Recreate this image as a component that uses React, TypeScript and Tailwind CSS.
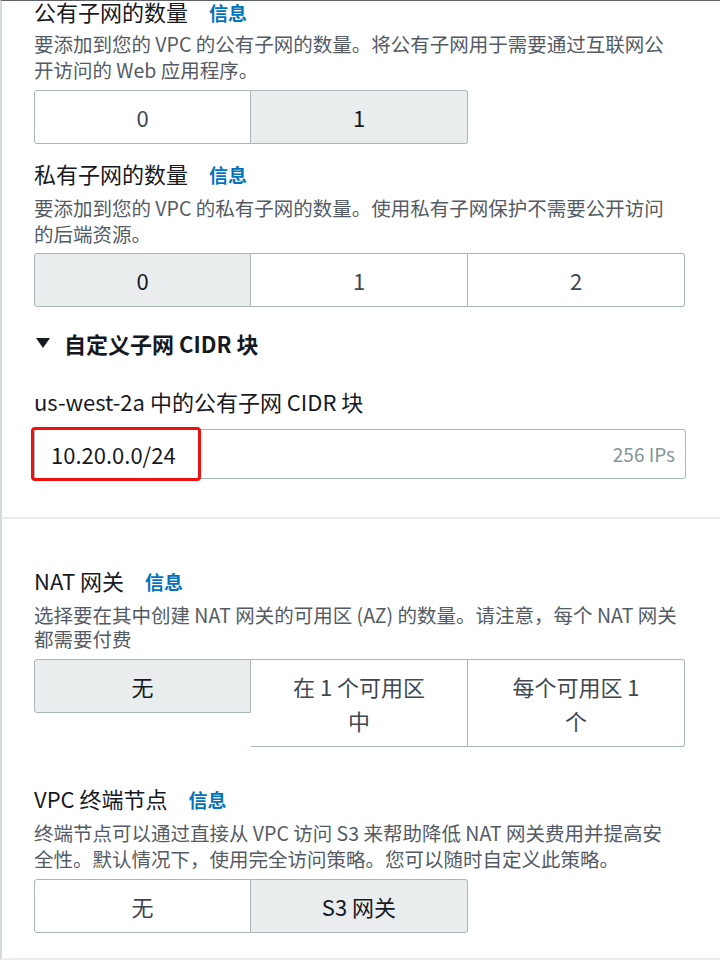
import React from 'react'

type Opt = { label: React.ReactNode; selected?: boolean }

function Segmented({ options }: { options: Opt[] }) {
  return (
    <div className="flex items-start">
      {options.map((o, i) => (
        <div
          key={i}
          className={
            'w-[217px] border-y border-r border-[#aab7b8] py-[9px] text-center text-[22px] leading-[34px] ' +
            (i === 0 ? 'border-l rounded-l-[3px] ' : '') +
            (i === options.length - 1 ? 'rounded-r-[3px] ' : '') +
            (o.selected ? 'bg-[#eaeded] text-[#16191f]' : 'bg-white text-[#414750]')
          }
        >
          {o.label}
        </div>
      ))}
    </div>
  )
}

function Label({ children }: { children: React.ReactNode }) {
  return (
    <div className="flex items-baseline gap-[21px] text-[22px] leading-[24px] text-[#16191f]">
      <span>{children}</span>
      <span className="text-[19px] font-bold text-[#0073bb]">信息</span>
    </div>
  )
}

function Desc({ children }: { children: React.ReactNode }) {
  return <p className="w-[640px] text-[19.5px] leading-[26px] text-[#545b64]">{children}</p>
}

export default function App() {
  return (
    <div className="h-[962px] w-[720px] overflow-hidden bg-white font-['Noto_Sans_CJK_SC','Noto_Sans',sans-serif]">
      <div className="h-[960px] border-t border-l-2 border-t-[#5f6368] border-l-[#d5dbdb] border-b-2 border-b-[#eaeded]">
        {/* subnets */}
        <section className="h-[518px] px-[32px]">
          <div className="-mt-[2px]">
            <Label>公有子网的数量</Label>
          </div>
          <div className="mt-[6px]">
            <Desc>要添加到您的 VPC 的公有子网的数量。将公有子网用于需要通过互联网公开访问的 Web 应用程序。</Desc>
          </div>
          <div className="mt-[7px]">
            <Segmented options={[{ label: '0' }, { label: '1', selected: true }]} />
          </div>

          <div className="mt-[17px]">
            <Label>私有子网的数量</Label>
          </div>
          <div className="mt-[8px]">
            <Desc>要添加到您的 VPC 的私有子网的数量。使用私有子网保护不需要公开访问的后端资源。</Desc>
          </div>
          <div className="mt-[6px]">
            <Segmented options={[{ label: '0', selected: true }, { label: '1' }, { label: '2' }]} />
          </div>

          <div className="mt-[24px] flex items-center gap-[14px] text-[22px] font-bold leading-[24px] text-[#16191f]">
            <svg width="14" height="12" viewBox="0 0 14 12" className="ml-[2px]">
              <path d="M0 1h14L7 11z" fill="#16191f" />
            </svg>
            <span>自定义子网 CIDR 块</span>
          </div>

          <div className="mt-[34px] text-[22px] leading-[24px] text-[#16191f]">us-west-2a 中的公有子网 CIDR 块</div>

          <div className="relative mt-[16px] flex h-[50px] w-[652px] items-center justify-between rounded-[3px] border border-[#aab7b8] pl-[16px] pr-[10px]">
            <span className="text-[22px] text-[#16191f]">10.20.0.0/24</span>
            <span className="text-[19px] text-[#879596]">256 IPs</span>
            <div className="absolute -left-[4px] -top-[3px] h-[54px] w-[170px] rounded-[4px] border-[3px] border-[#f01010]" />
          </div>
        </section>

        <div className="h-[2px] bg-[#eaeded]" />

        {/* NAT / endpoints */}
        <section className="px-[32px] pt-[49px]">
          <Label>NAT 网关</Label>
          <div className="mt-[9px]">
            <p className="w-[660px] text-[19.5px] leading-[24px] text-[#545b64]">
              选择要在其中创建 NAT 网关的可用区 (AZ) 的数量。请注意，每个 NAT 网关都需要付费
            </p>
          </div>
          <div className="mt-[8px]">
            <Segmented
              options={[
                { label: '无', selected: true },
                { label: <>在 1 个可用区<br />中</> },
                { label: <>每个可用区 1<br />个</> },
              ]}
            />
          </div>

          <div className="mt-[39px]">
            <Label>VPC 终端节点</Label>
          </div>
          <div className="mt-[8px]">
            <Desc>终端节点可以通过直接从 VPC 访问 S3 来帮助降低 NAT 网关费用并提高安全性。默认情况下，使用完全访问策略。您可以随时自定义此策略。</Desc>
          </div>
          <div className="mt-[7px]">
            <Segmented options={[{ label: '无' }, { label: 'S3 网关', selected: true }]} />
          </div>
        </section>
      </div>
    </div>
  )
}
